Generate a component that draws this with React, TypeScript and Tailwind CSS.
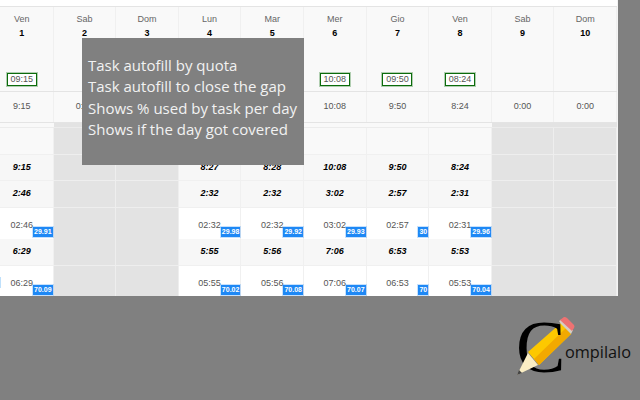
const days = [
  { name: 'Ven', num: '1', box: '09:15', total: '9:15', a: '9:15', b: '2:46', bt: '02:46', bp: '29.91', c: '6:29', ct: '06:29', cp: '70.09' },
  { name: 'Sab', num: '2', total: '0:00', off: true },
  { name: 'Dom', num: '3', total: '0:00', off: true },
  { name: 'Lun', num: '4', box: '08:27', total: '8:27', a: '8:27', b: '2:32', bt: '02:32', bp: '29.98', c: '5:55', ct: '05:55', cp: '70.02' },
  { name: 'Mar', num: '5', box: '08:28', total: '8:28', a: '8:28', b: '2:32', bt: '02:32', bp: '29.92', c: '5:56', ct: '05:56', cp: '70.08' },
  { name: 'Mer', num: '6', box: '10:08', total: '10:08', a: '10:08', b: '3:02', bt: '03:02', bp: '29.93', c: '7:06', ct: '07:06', cp: '70.07' },
  { name: 'Gio', num: '7', box: '09:50', total: '9:50', a: '9:50', b: '2:57', bt: '02:57', bp: '30', c: '6:53', ct: '06:53', cp: '70' },
  { name: 'Ven', num: '8', box: '08:24', total: '8:24', a: '8:24', b: '2:31', bt: '02:31', bp: '29.96', c: '5:53', ct: '05:53', cp: '70.04' },
  { name: 'Sab', num: '9', total: '0:00', off: true },
  { name: 'Dom', num: '10', total: '0:00', off: true },
];

function BoldRow({ values, height }: { values: (string | undefined)[]; height: string }) {
  return (
    <div className={`grid grid-cols-10 ${height}`}>
      {values.map((v, i) => (
        <div
          key={i}
          className={`flex items-center justify-center border-r border-b text-[9px] font-bold italic text-black ${
            v ? 'border-[#f0f0f0] bg-[#f7f7f7]' : 'border-[#eeeeee] bg-[#e3e3e3]'
          }`}
        >
          {v}
        </div>
      ))}
    </div>
  );
}

function TimeRow({ times, badges, height }: { times: (string | undefined)[]; badges: (string | undefined)[]; height: string }) {
  return (
    <div className={`grid grid-cols-10 ${height}`}>
      {times.map((t, i) => (
        <div
          key={i}
          className={`relative flex items-center justify-center border-r text-[9px] text-[#555] ${
            t ? 'border-[#f0f0f0] bg-white' : 'border-[#eeeeee] bg-[#e3e3e3]'
          }`}
        >
          {t && <span className="mt-[4px]">{t}</span>}
          {t && (
            <span className="absolute right-0 bottom-[2px] h-[10px] bg-[#1e88f5] px-[1px] text-[7px] leading-[10px] font-bold text-white ring-1 ring-[#1e88f5]/25">
              {badges[i]}
            </span>
          )}
        </div>
      ))}
    </div>
  );
}

export default function App() {
  return (
    <div className="flex h-[400px] w-[640px] flex-col overflow-hidden bg-[#808080] font-['Liberation_Sans',sans-serif]">
      <div className="relative h-[296px] w-[618px] shrink-0 overflow-hidden border-r border-[#f4f4f4] bg-white">
        <div className="-ml-[9px] w-[626px]">
          <div className="h-[6px]" />
          {/* day headers */}
          <div className="grid h-[86px] grid-cols-10 border-t border-b border-[#e4e4e4] bg-[#f9f9f9]">
            {days.map((d, i) => (
              <div key={i} className="flex flex-col items-center border-r border-[#f0f0f0] pt-[6px]">
                <div className="text-[9px] leading-[12px] text-[#666]">{d.name}</div>
                <div className="mt-[2px] text-[9px] leading-[12px] font-bold text-black">{d.num}</div>
                {d.box && (
                  <div className="mt-[34px] h-[13px] w-[30px] border border-[#0b6b0b] bg-white text-center text-[9px] leading-[11px] text-[#555] ring-1 ring-[#0b6b0b]/30">
                    {d.box}
                  </div>
                )}
              </div>
            ))}
          </div>
          {/* totals */}
          <div className="grid h-[31px] grid-cols-10 border-b border-[#e4e4e4] bg-[#f9f9f9]">
            {days.map((d, i) => (
              <div key={i} className="flex items-center justify-center border-r border-[#f0f0f0] text-[9px] text-[#555]">
                {d.total}
              </div>
            ))}
          </div>
          <div className="grid h-[5px] grid-cols-10 border-b border-[#ececec]">
            {days.map((d, i) => (
              <div key={i} className={d.off ? 'bg-[#e3e3e3]' : 'bg-[#f9f9f9]'} />
            ))}
          </div>
          <div className="grid h-[27px] grid-cols-10">
            {days.map((d, i) => (
              <div
                key={i}
                className={`border-r border-b ${d.off ? 'border-[#eeeeee] bg-[#e3e3e3]' : 'border-[#f0f0f0] bg-[#f9f9f9]'}`}
              />
            ))}
          </div>
          <BoldRow values={days.map((d) => d.a)} height="h-[26px]" />
          <BoldRow values={days.map((d) => d.b)} height="h-[27px]" />
          <TimeRow times={days.map((d) => d.bt)} badges={days.map((d) => d.bp)} height="h-[31px]" />
          <BoldRow values={days.map((d) => d.c)} height="h-[27px]" />
          <TimeRow times={days.map((d) => d.ct)} badges={days.map((d) => d.cp)} height="h-[31px]" />
        </div>

        {/* sliver of the cut-off column's badge */}
        <div className="absolute top-[277px] left-0 h-[11px] w-[1px] bg-[#bfe0fb]" />

        {/* callout over the table */}
        <div className="absolute top-[38px] left-[82px] h-[127px] w-[222px] bg-[#808080] pt-[17px] pl-[6px] font-['Open_Sans',sans-serif] text-[15px] leading-[21.3px] whitespace-nowrap text-[#f2f2f2]">
          <div>Task autofill by quota</div>
          <div>Task autofill to close the gap</div>
          <div>Shows % used by task per day</div>
          <div>Shows if the day got covered</div>
        </div>
      </div>

      {/* logo */}
      <div className="flex flex-1 justify-end pt-[14px] pr-[20px]">
        <div className="relative h-[64px] w-[104px]">
          {/* pencil body sits behind the C, the wooden tip in front */}
          <svg className="absolute top-[5px] -left-[4px]" width="64" height="64" viewBox="0 0 64 64">
            <path d="M16 37 L49 8 L59 19 L27 50 Z" fill="#fdc800" />
            <path d="M22 44 L54 13 L59 19 L27 50 Z" fill="#f2a900" />
            <path d="M47 6 L50 4 L61 15 L59 19 L49 9 Z" fill="#d4cfc4" />
            <path d="M48 5 L52 2 Q54 2 55 3 L62 10 Q63 12 62 13 L60 16 Z" fill="#ee7272" />
          </svg>
          <span className="absolute top-0 left-0 font-['Liberation_Serif',serif] text-[74px] leading-[74px] text-black">C</span>
          <svg className="absolute top-[5px] -left-[4px]" width="64" height="64" viewBox="0 0 64 64">
            <path d="M16 38 L26 50 L5 60 Z" fill="#fbeec4" />
            <path d="M5 60 L7 55 L10 58 Z" fill="#444" />
          </svg>
          <span className="absolute top-[31px] left-[49px] font-['Open_Sans',sans-serif] text-[16.3px] leading-[22px] text-[#111]">ompilalo</span>
        </div>
      </div>
    </div>
  );
}
